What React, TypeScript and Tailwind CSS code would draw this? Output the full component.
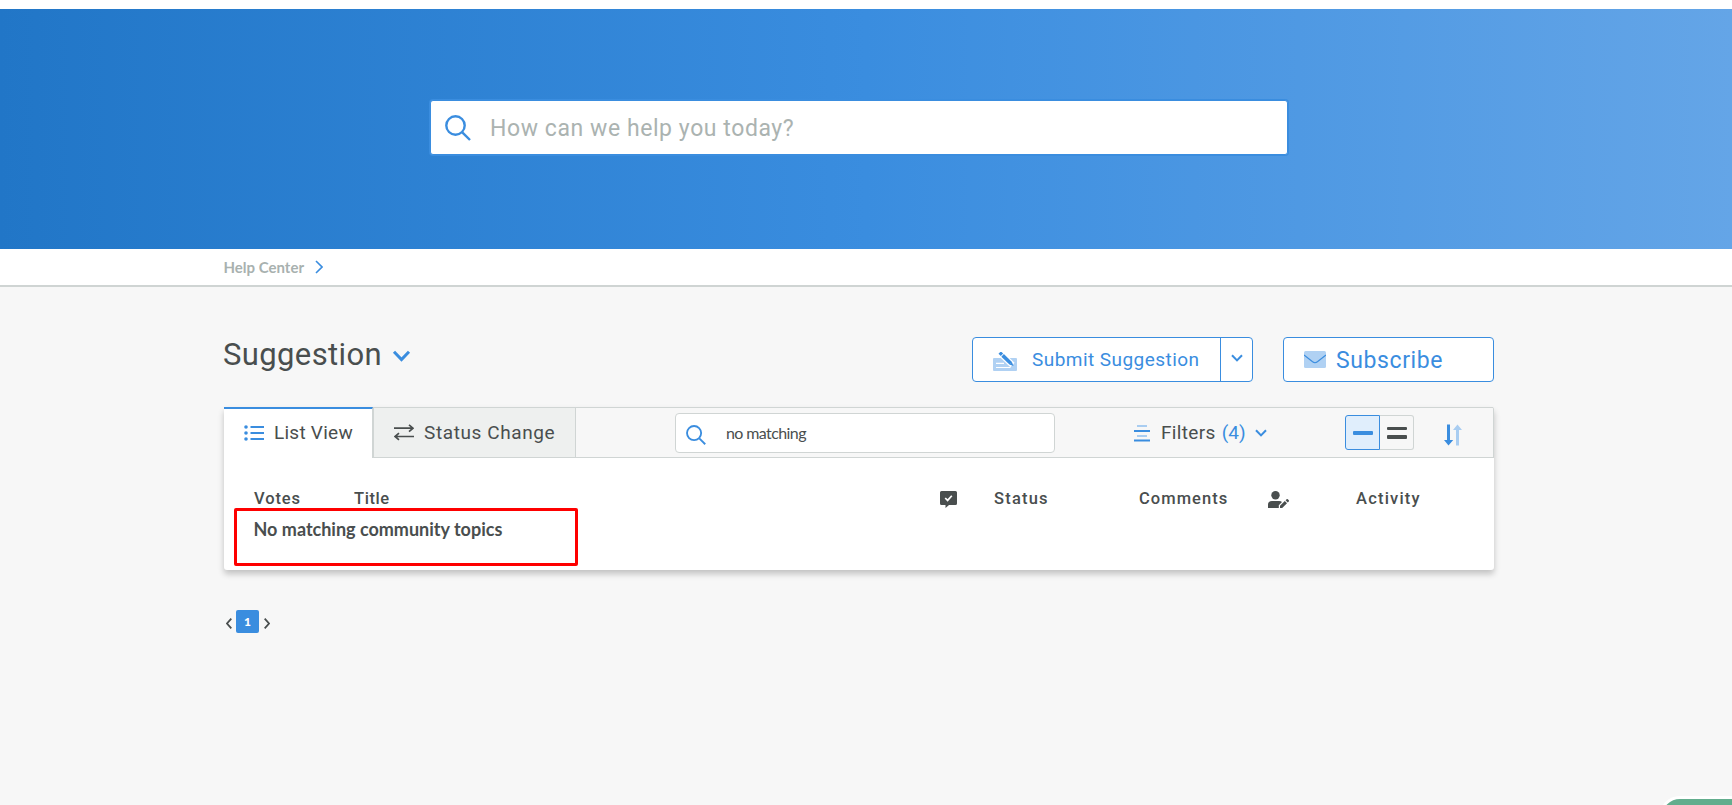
import type { ReactNode } from "react";

function SearchIcon({ className }: { className: string }) {
  return (
    <svg viewBox="0 0 26 26" className={className} fill="none" stroke="#3a8ddf" strokeWidth="2.4">
      <circle cx="10.5" cy="10.5" r="9.2" />
      <path d="M17.3 17.3 25 25" />
    </svg>
  );
}

function Chevron({ className, stroke = "#3a8ddf", width = 2 }: { className: string; stroke?: string; width?: number }) {
  return (
    <svg viewBox="0 0 12 8" className={className} fill="none" stroke={stroke} strokeWidth={width}>
      <path d="M1 1.2 6 6.4 11 1.2" />
    </svg>
  );
}

function Hero() {
  return (
    <div className="flex h-[240px] justify-center bg-[linear-gradient(90deg,#2176c7_0%,#3a8ddf_50%,#64a5e7_100%)] pt-[91px] pr-[14px]">
      <div className="flex h-[55px] w-[858px] items-center rounded-[3px] border border-[#3a8ddf] bg-white pl-[14px] shadow-[0_0_0_1px_#3a8ddf]">
        <SearchIcon className="h-[26px] w-[26px]" />
        <span className="mt-[1px] ml-[19px] text-[23px] leading-none tracking-[0.57px] text-[#abb3b1]">How can we help you today?</span>
      </div>
    </div>
  );
}

function Breadcrumb() {
  return (
    <div className="flex h-[38px] items-center border-b-2 border-[#cfd4d3] bg-white pl-[223.5px]">
      <span className="font-[Lato] text-[15px] font-bold text-[#a8b1af]">Help Center</span>
      <svg viewBox="0 0 8 14" className="ml-[11px] h-[14px] w-[8px]" fill="none" stroke="#3a8ddf" strokeWidth="1.6">
        <path d="M1 1 7 7 1 13" />
      </svg>
    </div>
  );
}

function Heading({ children, className }: { children: ReactNode; className: string }) {
  return <span className={`mt-[1px] text-[16.5px] leading-[20px] font-medium ${className}`}>{children}</span>;
}

function TitleRow() {
  return (
    <div className="flex h-[45px] items-start">
      <h1 className="ml-[-1px] text-[31px] leading-[36px] tracking-[0.38px]">Suggestion</h1>
      <Chevron className="mt-[13px] ml-[10px] h-[12px] w-[19px]" width={2} />
      <div className="ml-auto flex h-[45px] w-[281px] rounded-[4px] border border-[#3a8ddf] bg-white text-[#3a8ddf]">
        <div className="flex flex-1 items-center border-r border-[#3a8ddf] pl-[20px]">
          <svg viewBox="0 0 24 20" className="mt-[4px] h-[20px] w-[24px]">
            <rect y="6" width="24" height="13" rx="1" fill="#b0d1f3" />
            <path d="M3 11.4H11M3 15.5H17.5" stroke="#fff" strokeWidth="1.1" />
            <path d="M8 2 19.5 13" stroke="#fff" strokeWidth="6" />
            <path d="M6.7 .6 9 2.8" stroke="#3a8ddf" strokeWidth="3.4" />
            <path d="M9.6 3.4 17.7 11.2" stroke="#3a8ddf" strokeWidth="3.6" />
            <path d="M18.8 9.8 20.5 14 16.4 12.5Z" fill="#3a8ddf" />
          </svg>
          <span className="mt-[-1px] ml-[15px] text-[19px] leading-none tracking-[0.45px]">Submit Suggestion</span>
        </div>
        <div className="flex w-[31px] items-center justify-center pb-[3px]">
          <Chevron className="h-[8px] w-[12px]" />
        </div>
      </div>
      <div className="ml-[30px] flex h-[45px] w-[211px] items-center rounded-[4px] border border-[#3a8ddf] bg-white pl-[20px] text-[#3a8ddf]">
        <svg viewBox="0 0 22 17" className="h-[17px] w-[22px]">
          <rect width="22" height="17" rx="1.5" fill="#b0d1f3" />
          <path d="M0 4 8.6 10.8Q11 12.6 13.4 10.8L22 4" fill="none" stroke="#3a8ddf" strokeWidth="1.1" />
        </svg>
        <span className="mt-[1px] ml-[10px] text-[23px] leading-none tracking-[0.6px]">Subscribe</span>
      </div>
    </div>
  );
}

function Toolbar() {
  return (
    <div className="flex h-[51px] rounded-t-[2px] border-r border-[#d0d5d4] bg-[#f7f7f7]">
      <div className="flex w-[149px] items-center border-t-2 border-r border-t-[#3a8ddf] border-r-[#d0d5d4] bg-white pb-[2px] pl-[20px]">
        <svg viewBox="0 0 20 16" className="h-[16px] w-[20px]" stroke="#3a8ddf" strokeWidth="1.8" fill="#3a8ddf">
          <path d="M6.5 2H20M6.5 8H20M6.5 14H20" />
          <g stroke="none">
            <circle cx="2" cy="2" r="1.8" />
            <circle cx="2" cy="8" r="1.8" />
            <circle cx="2" cy="14" r="1.8" />
          </g>
        </svg>
        <span className="ml-[10px] text-[19px] leading-none tracking-[0.25px] whitespace-nowrap">List View</span>
      </div>
      <div className="flex w-[203px] items-center border border-[#d0d5d4] bg-[#eef0ef] pl-[20px]">
        <svg viewBox="0 0 20 17" className="h-[17px] w-[20px]" fill="none" stroke="#494e4e" strokeWidth="1.7">
          <path d="M0 4.2H19M15 .8 19 4.2 15 7.6M20 12.5H1M5 9.1 1 12.5 5 15.9" />
        </svg>
        <span className="mt-[-1px] ml-[10px] text-[19px] leading-none tracking-[0.6px] whitespace-nowrap">Status Change</span>
      </div>
      <div className="flex flex-1 border-y border-[#d0d5d4]">
        <div className="mt-[5px] ml-[99px] flex h-[40px] w-[380px] items-center rounded-[4px] border border-[#d0d5d4] bg-white pl-[10px]">
          <SearchIcon className="mt-[3px] h-[20px] w-[20px]" />
          <span className="ml-[20px] font-[Lato] text-[16px] leading-none tracking-[-0.6px]">no matching</span>
        </div>
        <div className="ml-[79px] flex items-center">
          <svg viewBox="0 0 16 18" className="h-[18px] w-[16px]" strokeWidth="2">
            <path d="M3 2H13M3 12H13" stroke="#a9cdf1" />
            <path d="M0 7H16M0 16.5H16" stroke="#3a8ddf" />
          </svg>
          <span className="mt-[-1px] ml-[11px] text-[19px] leading-none tracking-[0.35px]">Filters</span>
          <span className="mt-[-1px] ml-[6px] text-[19px] leading-none text-[#3a8ddf]">(4)</span>
          <Chevron className="ml-[9px] h-[8px] w-[12px]" />
        </div>
        <div className="mt-[7px] mr-[30px] ml-auto flex h-[35px] w-[69px]">
          <div className="flex w-[35px] items-center justify-center rounded-l-[3px] border border-[#3a8ddf] bg-[#e0eefc] pt-[1px]">
            <div className="h-[4px] w-[20px] rounded-[1px] bg-[#3a8ddf]" />
          </div>
          <div className="flex flex-1 flex-col items-center justify-center gap-[5px] rounded-r-[3px] border border-l-0 border-[#d0d5d4]">
            <div className="h-[3.5px] w-[20px] rounded-[1px] bg-[#494e4e]" />
            <div className="h-[3.5px] w-[20px] rounded-[1px] bg-[#494e4e]" />
          </div>
        </div>
        <svg viewBox="0 0 18 22" className="mt-[16px] mr-[31px] h-[22px] w-[18px]">
          <path d="M3 .5H6V16H9.2L4.5 21.5 0 16H3Z" fill="#3a8ddf" />
          <path d="M12 21.5H15V6H18L13.5 .5 9 6H12Z" fill="#a9cdf1" />
        </svg>
      </div>
    </div>
  );
}

function TopicsCard() {
  return (
    <div className="mt-[25px] h-[163px] rounded-[3px] bg-white shadow-[0_4px_6px_rgba(0,0,0,0.22)]">
      <Toolbar />
      <div className="flex pt-[30px] pl-[30px]">
        <Heading className="w-[100px] tracking-[0.9px]">Votes</Heading>
        <Heading className="w-[586px] tracking-[0.6px]">Title</Heading>
        <svg viewBox="0 0 17 17" className="mt-[3px] mr-[37px] h-[17px] w-[17px] shrink-0">
          <path d="M1.5 0H15.5Q17 0 17 1.5V12.5Q17 14 15.5 14H9L5.5 17V14H1.5Q0 14 0 12.5V1.5Q0 0 1.5 0Z" fill="#494e4e" />
          <path d="M5.2 7 7.6 9.4 11.8 4.7" fill="none" stroke="#fff" strokeWidth="1.7" />
        </svg>
        <Heading className="w-[145px] tracking-[1.2px]">Status</Heading>
        <Heading className="w-[129px] tracking-[1.05px]">Comments</Heading>
        <svg viewBox="0 0 21 17" className="mt-[3px] mr-[67px] h-[17px] w-[21px] shrink-0" fill="#494e4e">
          <circle cx="7.5" cy="4.2" r="4.2" />
          <path d="M0 17V13.5Q0 10 4 10H11Q13 10 14 11L10.8 14.2V17Z" />
          <path d="M12 17V14.8L16.8 10 19 12.2 14.2 17ZM17.6 9.2 18.6 8.2Q19.2 7.7 19.8 8.2L20.8 9.2Q21.2 9.8 20.8 10.4L19.8 11.4Z" />
        </svg>
        <Heading className="tracking-[1.2px]">Activity</Heading>
      </div>
      <div className="mt-[-1px] ml-[10px] h-[58px] w-[344px] rounded-[2px] border-[3px] border-[#fe0000] pt-[7px] pl-[16.5px] font-[Lato] text-[18px] leading-[22px] font-bold">
        No matching community topics
      </div>
    </div>
  );
}

function Pagination() {
  return (
    <div className="mt-[40px] flex h-[23px] items-center pl-[2px]">
      <svg viewBox="0 0 6 11" className="mt-[4px] h-[11px] w-[6px]" fill="none" stroke="#494e4e" strokeWidth="1.8">
        <path d="M5.3 .7 1 5.5 5.3 10.3" />
      </svg>
      <div className="ml-[4px] flex h-[23px] w-[23px] items-center justify-center rounded-[2px] bg-[#3a8ddf] pt-[1px] font-[Lato] text-[12px] font-black text-white">1</div>
      <svg viewBox="0 0 6 11" className="mt-[4px] ml-[5px] h-[11px] w-[6px]" fill="none" stroke="#494e4e" strokeWidth="1.8">
        <path d="M.7 .7 5 5.5 .7 10.3" />
      </svg>
    </div>
  );
}

export default function App() {
  return (
    <div className="relative h-[805px] w-[1732px] overflow-hidden bg-[#f7f7f7] font-[Roboto] text-[#494e4e]">
      <div className="h-[9px] bg-white" />
      <Hero />
      <Breadcrumb />
      <main className="ml-[224px] w-[1270px] pt-[50px]">
        <TitleRow />
        <TopicsCard />
        <Pagination />
      </main>
      <div className="absolute -right-[20px] -bottom-[40px] h-[46px] w-[90px] rounded-[18px] bg-[#62ad8d] shadow-[0_0_0_3px_#fff]" />
    </div>
  );
}
